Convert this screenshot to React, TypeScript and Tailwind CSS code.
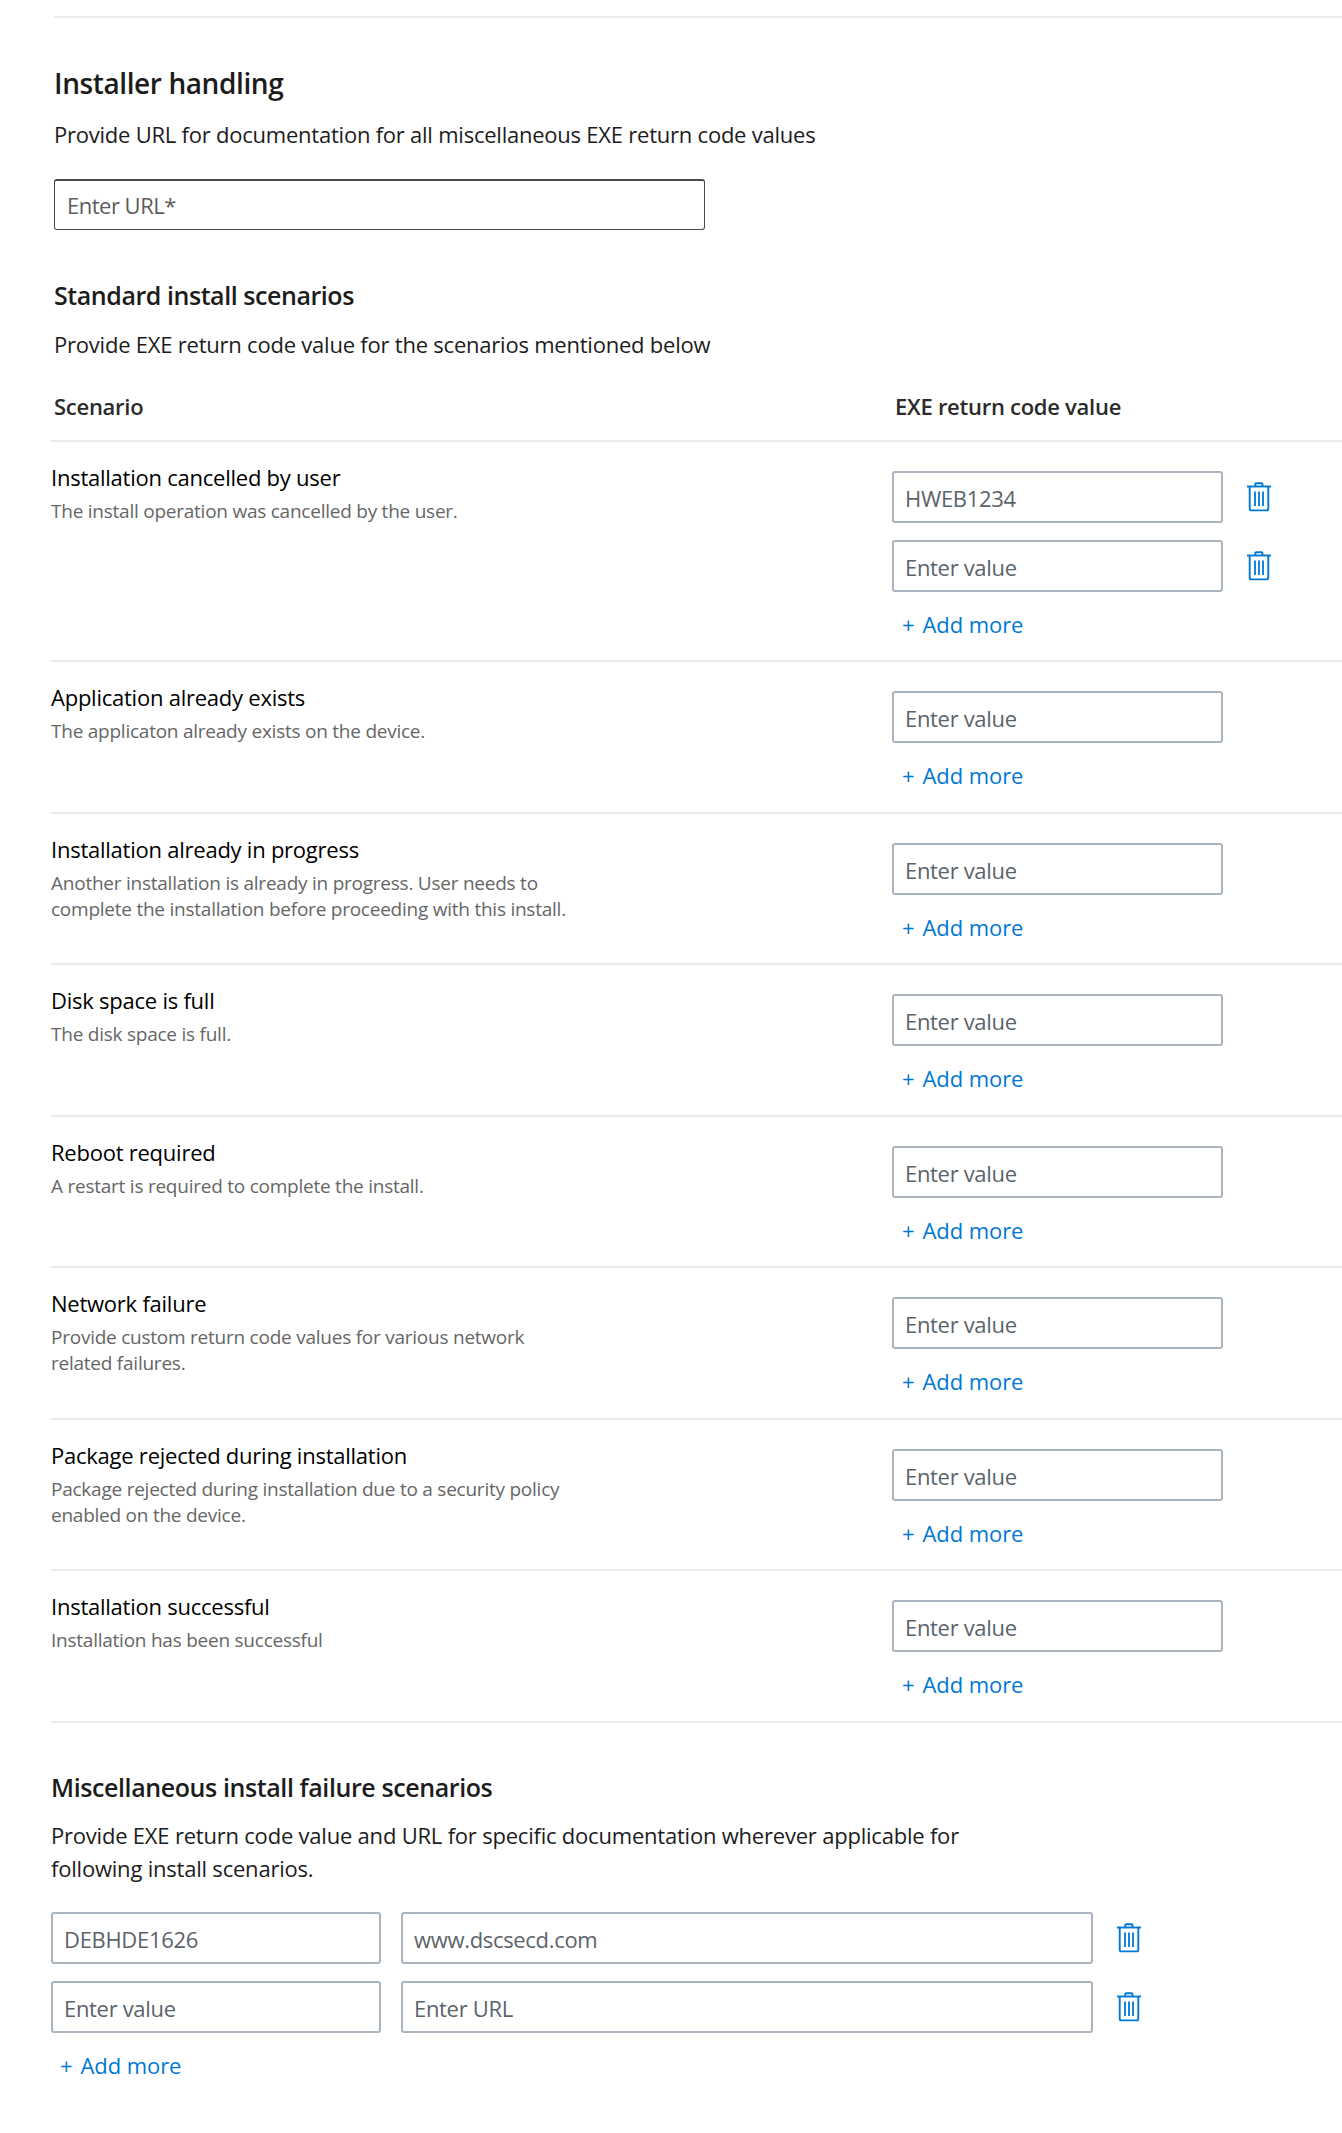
type Scenario = { title: string; description: string; values: string[]; removable?: boolean };

const scenarios: Scenario[] = [
  {
    title: "Installation cancelled by user",
    description: "The install operation was cancelled by the user.",
    values: ["HWEB1234", ""],
    removable: true,
  },
  { title: "Application already exists", description: "The applicaton already exists on the device.", values: [""] },
  {
    title: "Installation already in progress",
    description:
      "Another installation is already in progress. User needs to\ncomplete the installation before proceeding with this install.",
    values: [""],
  },
  { title: "Disk space is full", description: "The disk space is full.", values: [""] },
  { title: "Reboot required", description: "A restart is required to complete the install.", values: [""] },
  {
    title: "Network failure",
    description: "Provide custom return code values for various network\nrelated failures.",
    values: [""],
  },
  {
    title: "Package rejected during installation",
    description: "Package rejected during installation due to a security policy\nenabled on the device.",
    values: [""],
  },
  { title: "Installation successful", description: "Installation has been successful", values: [""] },
];

const failures = [
  { code: "DEBHDE1626", url: "www.dscsecd.com" },
  { code: "", url: "" },
];

function TrashIcon() {
  return (
    <svg width="24" height="30" viewBox="0 0 24 30" fill="none" stroke="#0078d4" className="block">
      <path d="M0 4.5H24" strokeWidth="1.9" />
      <path d="M8.3 4.5V2.2Q8.3 1.2 9.3 1.2H14.5Q15.5 1.2 15.5 2.2V4.5" strokeWidth="1.9" />
      <path d="M2.7 4.5V26.8Q2.7 28.4 4.3 28.4H19.7Q21.3 28.4 21.3 26.8V4.5" strokeWidth="1.9" />
      <path d="M8 9.5V24M12 9.5V24M16 9.5V24" strokeWidth="1.8" />
    </svg>
  );
}

function DeleteButton() {
  return (
    <button type="button" aria-label="Delete" className="ml-6 mt-[11px] self-start">
      <TrashIcon />
    </button>
  );
}

function Field({ value, placeholder, width }: { value: string; placeholder: string; width: string }) {
  return (
    <input
      defaultValue={value}
      placeholder={placeholder}
      className={`${width} h-[52px] rounded-[3px] border-2 border-[#a9b4be] bg-white pt-[2px] pl-[11px] text-[22px] tracking-[-0.32px] text-[#5b636b] placeholder:text-[#5b636b] outline-none`}
    />
  );
}

function AddMore({ indent }: { indent: string }) {
  return (
    <button
      type="button"
      className={`${indent} mt-4 flex h-8 gap-2 text-[22px] leading-8 tracking-[-0.08px] text-[#0078d4]`}
    >
      <span>+</span>
      <span>Add more</span>
    </button>
  );
}

function ScenarioRow({ title, description, values, removable }: Scenario) {
  return (
    <div className={`${removable ? "h-[220px]" : "h-[151.5px]"} flex border-b-2 border-[#eaeaea]`}>
      <div className="w-[841px] pt-5">
        <h3 className="h-[30px] text-[22px] leading-[30px] tracking-[-0.24px] text-black">{title}</h3>
        <p className="mt-1.5 whitespace-pre-line text-[19px] leading-[26px] tracking-[-0.24px] text-[#666]">
          {description}
        </p>
      </div>
      <div className="pt-[29px]">
        <div className="flex flex-col gap-[17px]">
          {values.map((value, i) => (
            <div key={i} className="flex h-[52px]">
              <Field value={value} placeholder="Enter value" width="w-[331px]" />
              {removable && <DeleteButton />}
            </div>
          ))}
        </div>
        <AddMore indent="ml-[10px]" />
      </div>
    </div>
  );
}

export default function App() {
  return (
    <main className="h-[2133px] overflow-hidden bg-white pl-[51px] pt-4 font-['Open_Sans','Noto_Sans',sans-serif] text-[#1c1c1c]">
      <section className="pl-[3px]">
        <hr className="border-0 border-t-2 border-[#ececec]" />
        <h1 className="mt-[47px] h-9 text-[28px] font-semibold leading-9 tracking-[-0.4px]">Installer handling</h1>
        <p className="mt-[17px] h-8 text-[22px] leading-8 tracking-[-0.23px]">
          Provide URL for documentation for all miscellaneous EXE return code values
        </p>
        <input
          placeholder="Enter URL*"
          className="mt-[29px] block h-[51px] w-[651px] rounded-[3px] border border-t-2 border-[#4a4a4a] bg-white pl-3 text-[22px] tracking-[-0.5px] text-[#5c5c5c] placeholder:text-[#5c5c5c] outline-none"
        />
        <h2 className="mt-12 h-[34px] text-[25px] font-semibold leading-[34px] tracking-[-0.44px]">
          Standard install scenarios
        </h2>
        <p className="mt-4 h-8 text-[22px] leading-8 tracking-[-0.22px]">
          Provide EXE return code value for the scenarios mentioned below
        </p>
      </section>

      <section>
        <div className="flex border-b-2 border-[#eaeaea] pt-[31px] pb-[19px] text-[22px] font-semibold leading-[30px] tracking-[-0.27px] text-[#2b2b2b]">
          <div className="w-[844px] pl-[3px]">Scenario</div>
          <div>EXE return code value</div>
        </div>
        {scenarios.map((s) => (
          <ScenarioRow key={s.title} {...s} />
        ))}
      </section>

      <section>
        <h2 className="mt-[47.5px] h-[34px] text-[25px] font-semibold leading-[34px] tracking-[-0.4px]">
          Miscellaneous install failure scenarios
        </h2>
        <p className="mt-[15px] w-[930px] text-[22px] leading-[33px] tracking-[-0.21px]">
          Provide EXE return code value and URL for specific documentation wherever applicable for
          <br />
          following install scenarios.
        </p>
        <div className="mt-[27px] flex flex-col gap-[17px]">
          {failures.map((f, i) => (
            <div key={i} className="flex h-[52px]">
              <Field value={f.code} placeholder="Enter value" width="w-[330px]" />
              <div className="w-5" />
              <Field value={f.url} placeholder="Enter URL" width="w-[692px]" />
              <DeleteButton />
            </div>
          ))}
        </div>
        <AddMore indent="ml-[9px]" />
      </section>
    </main>
  );
}
